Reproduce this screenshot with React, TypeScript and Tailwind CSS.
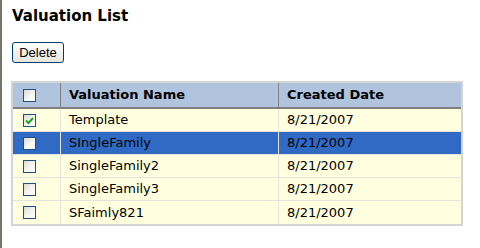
import React from "react";

type Valuation = {
  name: string;
  created: string;
  checked?: boolean;
  selected?: boolean;
};

const rows: Valuation[] = [
  { name: "Template", created: "8/21/2007", checked: true },
  { name: "SIngleFamily", created: "8/21/2007", selected: true },
  { name: "SingleFamily2", created: "8/21/2007" },
  { name: "SingleFamily3", created: "8/21/2007" },
  { name: "SFaimly821", created: "8/21/2007" },
];

function XpCheckbox({ checked }: { checked?: boolean }) {
  return (
    <span className="flex h-[13px] w-[13px] items-center justify-center border border-[#1c5180] bg-gradient-to-br from-[#dcdcd4] via-[#f4f4f0] to-white">
      {checked && (
        <svg width="9" height="9" viewBox="0 0 9 9">
          <path d="M1 4.5 L3.5 7 L8 2" fill="none" stroke="#21a121" strokeWidth="2" />
        </svg>
      )}
    </span>
  );
}

export default function App() {
  return (
    <div
      className="h-[248px] w-[480px] overflow-hidden border-l-2 border-[#76766e] bg-white text-black"
      style={{ fontFamily: '"DejaVu Sans", Verdana, sans-serif' }}
    >
      <h1 className="ml-[10px] mt-[7px] text-[15px] font-bold leading-[18px]">Valuation List</h1>

      <button
        className="ml-[10px] mt-[17px] flex h-[21px] w-[52px] items-center justify-center rounded-[3px] border border-[#003c74] bg-gradient-to-b from-white to-[#e6e5dc] text-[13px] leading-none"
        style={{ fontFamily: '"Liberation Sans", Arial, sans-serif' }}
      >
        Delete
      </button>

      <div className="ml-[9px] mt-[18px] w-[452px] border-2 border-[#d4d4d4] text-[13px]">
        <div className="flex h-[26px] border-b-2 border-[#808080] bg-[#b0c4de] font-bold">
          <div className="flex w-[48px] items-center border-r border-[#808080] pl-[10px]">
            <XpCheckbox />
          </div>
          <div className="flex w-[218px] items-center border-r border-[#808080] pl-[8px]">Valuation Name</div>
          <div className="flex flex-1 items-center pl-[8px]">Created Date</div>
        </div>

        {rows.map((r, i) => (
          <div
            key={r.name}
            className={`flex h-[23px] ${i < rows.length - 1 ? "border-b border-[#e4e4dc]" : "h-[22px]"} ${
              r.selected ? "bg-[#316ac5]" : "bg-[#ffffe0]"
            }`}
          >
            <div className="flex w-[48px] items-center border-r border-[#e4e4dc] pl-[10px]">
              <XpCheckbox checked={r.checked} />
            </div>
            <div className="flex w-[218px] items-center border-r border-[#e4e4dc] pl-[8px]">{r.name}</div>
            <div className="flex flex-1 items-center pl-[8px]">{r.created}</div>
          </div>
        ))}
      </div>
    </div>
  );
}
